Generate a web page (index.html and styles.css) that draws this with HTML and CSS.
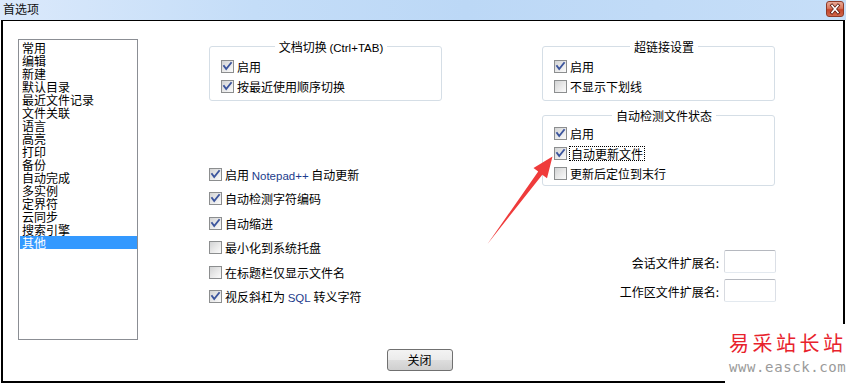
FILE: index.html
```html
<!DOCTYPE html>
<html lang="zh-CN">
<head>
<meta charset="utf-8">
<title>首选项</title>
<link rel="stylesheet" href="styles.css">
</head>
<body>
<div class="window">
  <div class="titlebar">
    <span class="title">首选项</span>
    <span class="close"><svg viewBox="0 0 18 16" width="18" height="16"><path d="M6 4.5 L12 11.5 M12 4.5 L6 11.5" stroke="#5a1a10" stroke-width="3.2" stroke-linecap="square"/><path d="M6 4.5 L12 11.5 M12 4.5 L6 11.5" stroke="#ffffff" stroke-width="1.6" stroke-linecap="square"/></svg></span>
  </div>
  <div class="frame">
    <div class="main">
      <div class="list">
        <div class="item">常用</div>
        <div class="item">编辑</div>
        <div class="item">新建</div>
        <div class="item">默认目录</div>
        <div class="item">最近文件记录</div>
        <div class="item">文件关联</div>
        <div class="item">语言</div>
        <div class="item">高亮</div>
        <div class="item">打印</div>
        <div class="item">备份</div>
        <div class="item">自动完成</div>
        <div class="item">多实例</div>
        <div class="item">定界符</div>
        <div class="item">云同步</div>
        <div class="item">搜索引擎</div>
        <div class="item selected">其他</div>
      </div>

      <div class="col col1">
        <fieldset class="group">
          <legend align="center">文档切换 <span class="lat">(Ctrl+TAB)</span></legend>
          <div class="row"><span class="cb"><svg viewBox="0 0 11 11" width="11" height="11"><path d="M2 5 L4.2 8 L9 2"/></svg></span><span class="txt">启用</span></div>
          <div class="row"><span class="cb"><svg viewBox="0 0 11 11" width="11" height="11"><path d="M2 5 L4.2 8 L9 2"/></svg></span><span class="txt">按最近使用顺序切换</span></div>
        </fieldset>
        <div class="checklist">
          <div class="row"><span class="cb"><svg viewBox="0 0 11 11" width="11" height="11"><path d="M2 5 L4.2 8 L9 2"/></svg></span><span class="txt">启用 <span class="lat blue">Notepad++</span> 自动更新</span></div>
          <div class="row"><span class="cb"><svg viewBox="0 0 11 11" width="11" height="11"><path d="M2 5 L4.2 8 L9 2"/></svg></span><span class="txt">自动检测字符编码</span></div>
          <div class="row"><span class="cb"><svg viewBox="0 0 11 11" width="11" height="11"><path d="M2 5 L4.2 8 L9 2"/></svg></span><span class="txt">自动缩进</span></div>
          <div class="row"><span class="cb"></span><span class="txt">最小化到系统托盘</span></div>
          <div class="row"><span class="cb"></span><span class="txt">在标题栏仅显示文件名</span></div>
          <div class="row"><span class="cb"><svg viewBox="0 0 11 11" width="11" height="11"><path d="M2 5 L4.2 8 L9 2"/></svg></span><span class="txt">视反斜杠为 <span class="lat blue">SQL</span> 转义字符</span></div>
        </div>
      </div>

      <div class="col col2">
        <fieldset class="group">
          <legend align="center">超链接设置</legend>
          <div class="row"><span class="cb"><svg viewBox="0 0 11 11" width="11" height="11"><path d="M2 5 L4.2 8 L9 2"/></svg></span><span class="txt">启用</span></div>
          <div class="row"><span class="cb"></span><span class="txt">不显示下划线</span></div>
        </fieldset>
        <fieldset class="group group3">
          <legend align="center">自动检测文件状态</legend>
          <div class="row"><span class="cb"><svg viewBox="0 0 11 11" width="11" height="11"><path d="M2 5 L4.2 8 L9 2"/></svg></span><span class="txt">启用</span></div>
          <div class="row"><span class="cb"><svg viewBox="0 0 11 11" width="11" height="11"><path d="M2 5 L4.2 8 L9 2"/></svg></span><span class="txt focus">自动更新文件</span></div>
          <div class="row"><span class="cb"></span><span class="txt">更新后定位到末行</span></div>
        </fieldset>
        <div class="ext">
          <div class="ext-row"><span class="ext-label">会话文件扩展名:</span><input class="ext-input" type="text"></div>
          <div class="ext-row"><span class="ext-label">工作区文件扩展名:</span><input class="ext-input" type="text"></div>
        </div>
      </div>
    </div>
    <div class="footer">
      <button class="btn" type="button">关闭</button>
    </div>
  </div>

  <svg class="arrow" viewBox="0 0 846 384" width="846" height="384">
    <polygon points="487.5,244 542.3,174.8 547,178.2 552.5,156.5 533.5,168 538.2,171.6" fill="#ef3b3b"/>
  </svg>

  <div class="watermark">
    <div class="wm-cn">易采站长站</div>
    <div class="wm-en">www.easck.com</div>
  </div>
</div>
</body>
</html>
```

FILE: styles.css
```css
* { box-sizing: border-box; }

html, body {
  margin: 0;
  padding: 0;
  background: #ffffff;
}

body {
  width: 846px;
  height: 384px;
  overflow: hidden;
  font-family: "Noto Sans CJK SC", "Liberation Sans", sans-serif;
  font-size: 12px;
  color: #000;
}

.window {
  position: relative;
  width: 846px;
  height: 384px;
}

/* title bar */
.titlebar {
  height: 20px;
  display: flex;
  align-items: flex-start;
  justify-content: space-between;
  padding: 0 2px 0 3px;
  background: linear-gradient(to right, #dbe9fb 0%, #c4ddf8 30%, #bcd8f6 55%, #c6def8 100%);
}

.title {
  line-height: 18px;
  font-size: 12px;
  color: #111;
}

.close {
  margin-top: 1px;
  width: 18px;
  height: 16px;
  border: 1px solid #8e3a28;
  border-radius: 3px;
  background: linear-gradient(to bottom, #e9a996 0%, #d9775e 45%, #c4442a 55%, #d0674a 100%);
  display: flex;
  align-items: center;
  justify-content: center;
  overflow: hidden;
}

.close svg { display: block; flex: none; }

/* dialog frame */
.frame {
  margin-left: 1px;
  width: 844px;
  height: 363px;
  border: 2px solid #000;
  border-top-width: 1px;
  background: #fff;
}

.main {
  display: flex;
  align-items: flex-start;
  padding: 18px 0 0 15px;
}

/* list box */
.list {
  width: 120px;
  height: 301px;
  border: 1px solid #8b8e94;
  padding: 1px 0 1px 1px;
  flex: none;
}

.item {
  height: 13px;
  line-height: 13px;
  padding-left: 2px;
  white-space: nowrap;
}

.item.selected {
  background: #3399ff;
  color: #fff;
}

/* columns */
.col1 {
  margin-left: 71px;
  width: 233px;
  flex: none;
}

.col2 {
  margin-left: 100px;
  width: 234px;
  flex: none;
}

.group {
  margin: 1px 0 0 0;
  padding: 3px 0 4px 11px;
  border: 1px solid #d5dee6;
  border-radius: 3px;
  min-width: 0;
  width: 233px;
}

.group legend {
  margin: 0 auto;
  padding: 0 4px;
  line-height: 13px;
  height: 13px;
  font-size: 12px;
  white-space: nowrap;
}

.group3 {
  margin-top: 8px;
  padding-top: 1px;
  padding-bottom: 2px;
}

.row {
  height: 20px;
  display: flex;
  align-items: center;
  white-space: nowrap;
}

.txt {
  white-space: pre;
}

.cb {
  flex: none;
  width: 13px;
  height: 13px;
  border: 1px solid #8c8e8f;
  background: linear-gradient(135deg, #d2d3d4 0%, #e8e8e8 50%, #fbfbfb 100%);
  margin-right: 3px;
  display: flex;
  align-items: center;
  justify-content: center;
}

.cb svg { display: block; }

.cb path {
  fill: none;
  stroke: #3c559d;
  stroke-width: 1.9;
  stroke-linecap: square;
  stroke-linejoin: miter;
}

.focus {
  margin-left: -1px;
  padding: 0 1px;
  border: 1px dotted #000;
  line-height: 13px;
}

.lat {
  font-family: "Liberation Sans", "DejaVu Sans", sans-serif;
  font-size: 11.5px;
}

.blue { color: #1c3c8c; }

.checklist {
  margin-top: 61px;
}

.checklist .row {
  height: 24.5px;
}

/* extension fields */
.ext {
  margin-top: 64px;
  display: flex;
  flex-direction: column;
  align-items: flex-end;
  gap: 6px;
}

.ext-row {
  display: flex;
  align-items: center;
  height: 23px;
}

.ext-label {
  margin-right: 5px;
  padding-top: 2px;
  white-space: nowrap;
}

.ext-input {
  width: 52px;
  height: 23px;
  margin: 0;
  padding: 0;
  border: 1px solid;
  border-color: #b5b8bf #dbdfe6 #e3e9ef #d7dae0;
  border-radius: 2px;
  background: #fff;
  outline: none;
}

/* footer */
.footer {
  display: flex;
  justify-content: center;
  padding-right: 7px;
  margin-top: 9px;
}

.btn {
  width: 66px;
  height: 22px;
  margin: 0;
  padding: 0;
  border: 1px solid #707070;
  border-radius: 3px;
  background: linear-gradient(to bottom, #f3f3f3 0%, #ebebeb 48%, #dddddd 52%, #cfcfcf 100%);
  font-family: "Noto Sans CJK SC", sans-serif;
  font-size: 12px;
  color: #000;
  line-height: 18px;
}

/* overlays */
.arrow {
  position: absolute;
  left: 0;
  top: 0;
  pointer-events: none;
}

.watermark {
  position: absolute;
  right: 0;
  bottom: 0;
  width: 121px;
  height: 60px;
  background: #fff;
  padding: 7px 0 0 4px;
}

.wm-cn {
  font-family: "Noto Sans CJK SC", sans-serif;
  font-size: 20px;
  line-height: 24px;
  letter-spacing: 3.5px;
  color: #e8222c;
  white-space: nowrap;
}

.wm-en {
  margin-top: 5px;
  font-family: "DejaVu Sans Mono", "Liberation Mono", monospace;
  font-size: 14px;
  line-height: 14px;
  letter-spacing: 0.6px;
  color: #9a9a9a;
  white-space: nowrap;
}
```
